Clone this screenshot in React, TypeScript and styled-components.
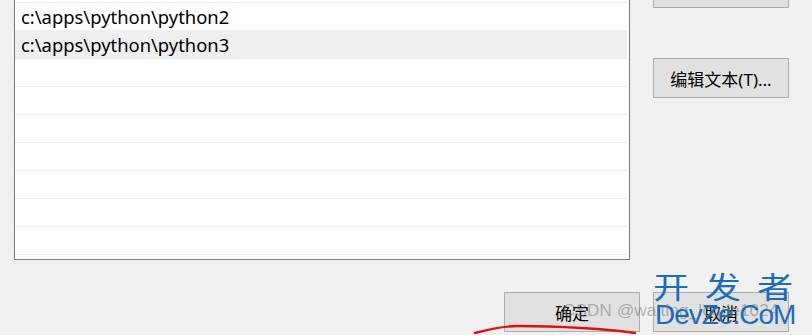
import React from "react";
import styled, { createGlobalStyle } from "styled-components";

const Global = createGlobalStyle`
  html, body { margin: 0; padding: 0; background: #f0f0f0; overflow: hidden; }
  body { width: 812px; height: 335px; }
  #root { width: 812px; height: 335px; position: relative; overflow: hidden; }
`;

const FONT = `"Noto Sans", "Noto Sans CJK SC", sans-serif`;

const Dialog = styled.div`
  display: flex;
  flex-direction: column;
  margin-top: -32px;
  font-family: ${FONT};
  color: #000;
`;

const Main = styled.div`
  display: flex;
  padding-left: 14px;
`;

const ListBox = styled.div`
  width: 614px;
  height: 257px;
  border: 1px solid #7a7a7a;
  background: #fff;
  padding-top: 33px;
  box-sizing: content-box;
  overflow: hidden;
`;

const Row = styled.div<{ $selected?: boolean }>`
  height: 28px;
  box-sizing: border-box;
  margin-right: 2px;
  border-top: 1px solid ${(p) => (p.$selected ? "#efefef" : "#ececec")};
  background: ${(p) => (p.$selected ? "#efefef" : "#fff")};
  font-size: 18.4px;
  line-height: 28px;
  padding-left: 6px;
  white-space: nowrap;
`;

const Side = styled.div`
  display: flex;
  flex-direction: column;
  margin-left: 23px;
`;

const Button = styled.div<{ $gap?: number }>`
  width: 136px;
  height: 40px;
  box-sizing: border-box;
  background: #e1e1e1;
  border: 1px solid #adadad;
  display: flex;
  align-items: center;
  justify-content: center;
  font-size: 17px;
  margin-top: ${(p) => p.$gap ?? 0}px;
  white-space: nowrap;
`;

const Footer = styled.div`
  display: flex;
  justify-content: flex-end;
  gap: 13px;
  padding-right: 23px;
  margin-top: 32px;
`;

const Watermark = styled.div`
  position: absolute;
  left: 653px;
  top: 266px;
  display: flex;
  flex-direction: column;
  align-items: flex-start;
  color: #1b6dbb;
  font-family: "Noto Sans CJK SC", sans-serif;
  pointer-events: none;
`;

const WmCn = styled.div`
  font-size: 36px;
  line-height: 36px;
  letter-spacing: 16px;
  white-space: nowrap;
  transform: scaleY(0.82);
  transform-origin: 0 60%;
`;

const WmEn = styled.div`
  font-family: "Liberation Sans", Arial, sans-serif;
  font-size: 28px;
  line-height: 30px;
  margin-top: -2px;
  margin-left: 2px;
  letter-spacing: -1px;
  white-space: nowrap;
`;

const Csdn = styled.div`
  position: absolute;
  left: 563px;
  top: 301px;
  font-family: "Liberation Sans", Arial, sans-serif;
  font-size: 17px;
  color: rgba(120, 120, 120, 0.55);
  white-space: nowrap;
  pointer-events: none;
  letter-spacing: 0.2px;
`;

const Scribble = styled.svg`
  position: absolute;
  left: 468px;
  top: 320px;
  pointer-events: none;
`;

const rows = [
  "c:\\apps\\python\\python2",
  "c:\\apps\\python\\python3",
  "",
  "",
  "",
  "",
  "",
  "",
  "",
  "",
];

export default function App() {
  return (
    <>
      <Global />
      <Dialog>
        <Main>
          <ListBox>
            {rows.map((r, i) => (
              <Row key={i} $selected={i === 1}>
                {r}
              </Row>
            ))}
          </ListBox>
          <Side>
            <Button>浏览(B)...</Button>
            <Button $gap={50}>编辑文本(T)...</Button>
          </Side>
        </Main>
        <Footer>
          <Button>确定</Button>
          <Button>取消</Button>
        </Footer>
      </Dialog>
      <Csdn>CSDN @waiting_lcode1024</Csdn>
      <Watermark>
        <WmCn>开发者</WmCn>
        <WmEn>DevZe.CoM</WmEn>
      </Watermark>
      <Scribble width="180" height="20" viewBox="0 0 180 20">
        <path
          d="M7 13 C 22 9, 38 6, 50 6 C 90 6, 140 9, 167 13"
          fill="none"
          stroke="#e01010"
          strokeWidth="2.4"
          strokeLinecap="round"
        />
      </Scribble>
    </>
  );
}
